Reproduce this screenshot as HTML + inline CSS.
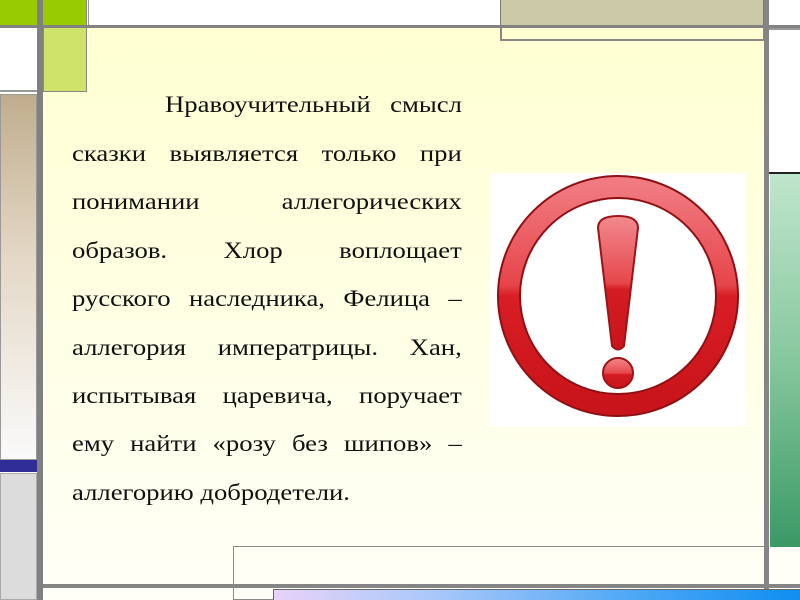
<!DOCTYPE html>
<html><head><meta charset="utf-8"><style>
*{margin:0;padding:0;box-sizing:border-box}
body{width:800px;height:600px;position:relative;overflow:hidden;background:#fffff8;font-family:"Liberation Serif",serif}
.a{position:absolute}
.ln{position:absolute;left:72px;width:336px;font-size:23px;color:#111;text-align:justify;text-align-last:justify;white-space:nowrap;line-height:24px;transform:scaleX(1.16);transform-origin:0 0}
</style></head><body>
<div class="a" style="left:43px;top:28px;width:722px;height:556px;background:linear-gradient(#ffffd2,#fffff6)"></div>
<div class="a" style="left:0;top:0;width:87px;height:26px;background:#99cc00;border-right:1px solid #888"></div>
<div class="a" style="left:88px;top:0;width:412px;height:26px;background:#fff;border-left:1px solid #999"></div>
<div class="a" style="left:500px;top:0;width:264px;height:26px;background:#cbc9a6;border:1px solid #777;border-top:0"></div>
<div class="a" style="left:500px;top:26px;width:265px;height:15px;border:2px solid #888;border-top:0"></div>
<div class="a" style="left:769px;top:0;width:31px;height:26px;background:#fff"></div>
<div class="a" style="left:0;top:25px;width:800px;height:3px;background:#828282"></div>
<div class="a" style="left:37px;top:0;width:6px;height:600px;background:#808080"></div>
<div class="a" style="left:0;top:28px;width:37px;height:64px;background:#fff;border-bottom:2px solid #999"></div>
<div class="a" style="left:0;top:94px;width:37px;height:366px;background:linear-gradient(#c0ad8d,#e4d8c6 45%,#fafafa);border:1px solid #999"></div>
<div class="a" style="left:0;top:460px;width:37px;height:12px;background:#2e2e96"></div>
<div class="a" style="left:0;top:473px;width:37px;height:127px;background:#dcdcdc;border:1px solid #aaa"></div>
<div class="a" style="left:43px;top:28px;width:44px;height:64px;background:#cfe36a;border:1px solid #888;border-top:0"></div>
<div class="a" style="left:764px;top:0;width:5px;height:600px;background:#858585"></div>
<div class="a" style="left:769px;top:28px;width:31px;height:145px;background:#fff;border-top:2px solid #999"></div>
<div class="a" style="left:769px;top:172px;width:31px;height:2px;background:#222"></div>
<div class="a" style="left:770px;top:174px;width:30px;height:373px;background:linear-gradient(#bfe6cc,#87c79e 50%,#3a9966)"></div>
<div class="a" style="left:233px;top:546px;width:532px;height:54px;border:1px solid #8a8a8a;border-right:0"></div>
<div class="a" style="left:43px;top:584px;width:757px;height:4px;background:#858585"></div>
<div class="a" style="left:273px;top:589px;width:527px;height:11px;background:linear-gradient(90deg,#e8d2f8,#aac8fa 30%,#4aa6f5 70%,#0f8ef2);border-left:1px solid #666;border-top:1px solid #666"></div>
<div class="ln" style="top:93px;left:165px;width:256px">Нравоучительный смысл</div>
<div class="ln" style="top:142px">сказки выявляется только при</div>
<div class="ln" style="top:190px">понимании аллегорических</div>
<div class="ln" style="top:239px">образов. Хлор воплощает</div>
<div class="ln" style="top:287px">русского наследника, Фелица –</div>
<div class="ln" style="top:336px">аллегория императрицы. Хан,</div>
<div class="ln" style="top:384px">испытывая царевича, поручает</div>
<div class="ln" style="top:432px">ему найти «розу без шипов» –</div>
<div class="ln" style="top:481px;text-align-last:left">аллегорию добродетели.</div>
<svg class="a" style="left:490px;top:173px" width="256" height="253" viewBox="0 0 256 253">
<defs>
<linearGradient id="r" x1="0" y1="0" x2="0" y2="1"><stop offset="0" stop-color="#f07a80"/><stop offset="0.45" stop-color="#e6454a"/><stop offset="0.5" stop-color="#d81e24"/><stop offset="1" stop-color="#c8141a"/></linearGradient>
<linearGradient id="e" x1="0" y1="0" x2="0" y2="1"><stop offset="0" stop-color="#f28a8e"/><stop offset="0.5" stop-color="#e6474c"/><stop offset="0.55" stop-color="#d41c22"/><stop offset="1" stop-color="#c8151b"/></linearGradient>
</defs>
<rect width="256" height="253" fill="#fff"/>
<circle cx="128" cy="123" r="109" fill="none" stroke="#8e1014" stroke-width="24"/>
<circle cx="128" cy="123" r="109" fill="none" stroke="url(#r)" stroke-width="20"/>
<path d="M108 55 Q108 43 128 43 Q148 43 148 55 L134 173 Q128 180 122 173 Z" fill="url(#e)" stroke="#9a1418" stroke-width="2"/>
<circle cx="128" cy="200" r="15" fill="url(#e)" stroke="#9a1418" stroke-width="2"/>
</svg>
</body></html>
